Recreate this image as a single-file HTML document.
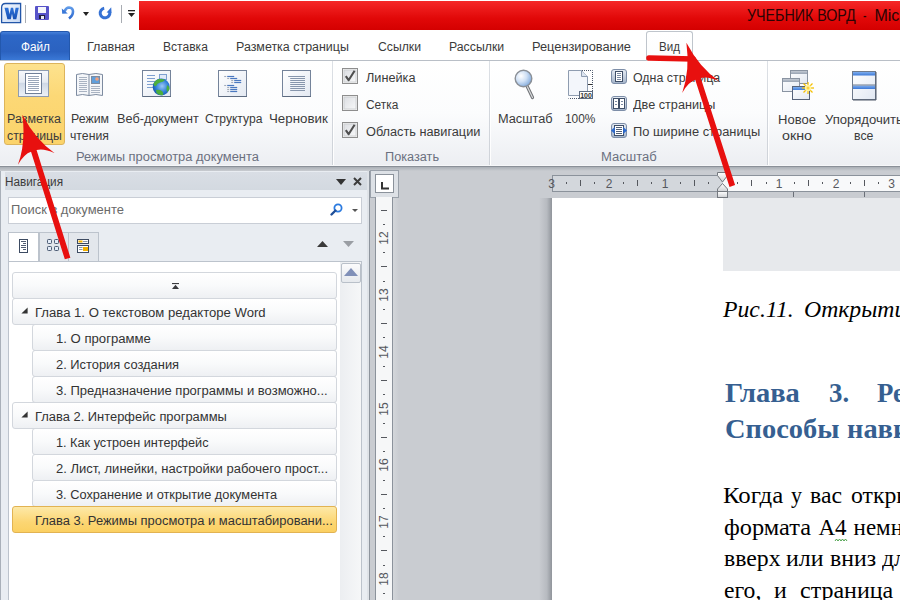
<!DOCTYPE html>
<html><head><meta charset="utf-8"><style>
html,body{margin:0;padding:0;}
body{width:900px;height:600px;overflow:hidden;position:relative;background:#fff;font-family:"Liberation Sans",sans-serif;}
.t{position:absolute;white-space:nowrap;transform-origin:0 0;}
.r{position:absolute;box-sizing:border-box;}
svg.r{overflow:visible;}
</style></head><body>
<div class="r" style="left:0px;top:0px;width:900px;height:30px;background:#ffffff;"></div>
<svg class="r" style="left:0px;top:2px;" width="23" height="22" viewBox="0 0 23 22"><defs><linearGradient id="wg" x1="0" y1="0" x2="1" y2="1"><stop offset="0" stop-color="#f4f8fe"/><stop offset="1" stop-color="#c6d8f3"/></linearGradient><linearGradient id="wb" x1="0" y1="0" x2="0" y2="1"><stop offset="0" stop-color="#2e72d8"/><stop offset="1" stop-color="#1650b4"/></linearGradient></defs>
<path d="M5.5 1.5 H20.6 V20.6 H1.6 V5.5 Q1.6 1.5 5.5 1.5Z" fill="url(#wg)" stroke="#2356a8" stroke-width="1.3"/>
<path d="M4.5 5.7 H8.3 L9.5 12.3 L10.9 5.7 H13.1 L14.4 12.3 L15.6 5.7 H18.8 L16.3 17.3 H13.2 L12 11.8 L10.8 17.3 H7.4Z" fill="url(#wb)"/></svg>
<div class="r" style="left:25px;top:5px;width:1px;height:18px;background:#a8acb2;"></div>
<svg class="r" style="left:35px;top:6px;" width="14" height="14" viewBox="0 0 14 14"><rect x="0" y="0" width="14" height="14" rx="1" fill="#5753c9"/><rect x="3" y="1" width="8" height="6" fill="#f4f6fb"/><rect x="4" y="9" width="6" height="4" fill="#202040"/><rect x="6" y="10" width="3" height="3" fill="#e8e8f0"/></svg>
<svg class="r" style="left:58px;top:3px;" width="18" height="18" viewBox="0 0 18 18"><defs><linearGradient id="ug" x1="0" y1="0" x2="0" y2="1"><stop offset="0" stop-color="#5f9ae8"/><stop offset="1" stop-color="#2f6ad0"/></linearGradient></defs><path d="M6.5 8.5 Q8 4.5 11 4.5 Q15 4.8 15 8.5 Q15 12.5 11 15.5" fill="none" stroke="url(#ug)" stroke-width="2.6"/><path d="M3.8 5.5 L4.2 10.8 L9.8 10.4Z" fill="#3a78d8"/></svg>
<svg class="r" style="left:83px;top:12px;" width="6" height="4" viewBox="0 0 6 4"><path d="M0 0 H6 L3 4Z" fill="#222"/></svg>
<svg class="r" style="left:97px;top:4px;" width="16" height="16" viewBox="0 0 16 16"><path d="M7.2 4.3 A4.8 4.8 0 1 0 12.5 7.4" fill="none" stroke="#3672d4" stroke-width="3"/><path d="M9.6 8.6 L14.6 8.9 L14.2 3.2Z" fill="#3672d4"/></svg>
<div class="r" style="left:121px;top:5px;width:1px;height:18px;background:#a8acb2;"></div>
<svg class="r" style="left:128px;top:10px;" width="7" height="7" viewBox="0 0 7 7"><rect x="0" y="0" width="7" height="1.3" fill="#222"/><path d="M0 3 H7 L3.5 7Z" fill="#222"/></svg>
<div class="r" style="left:139px;top:1px;width:761px;height:29px;background:linear-gradient(#f52828,#e10808 60%,#d40000);"></div>
<div class="t" style="left:747.00px;top:8.26px;font-size:16px;line-height:16px;color:#2a0404;font-family:'Liberation Sans', sans-serif;font-weight:normal;font-style:normal;transform:scaleX(0.8912);">УЧЕБНИК ВОРД</div>
<div class="t" style="left:863.30px;top:8.26px;font-size:16px;line-height:16px;color:#2a0404;font-family:'Liberation Sans', sans-serif;font-weight:normal;font-style:normal;transform:scaleX(0.6476);">-</div>
<div class="t" style="left:874.40px;top:8.26px;font-size:16px;line-height:16px;color:#2a0404;font-family:'Liberation Sans', sans-serif;font-weight:normal;font-style:normal;">Microsoft Word</div>
<div class="r" style="left:0px;top:30px;width:900px;height:30px;background:#ffffff;"></div>
<div class="r" style="left:0px;top:60px;width:900px;height:1px;background:#b9bfc7;"></div>
<div class="r" style="left:0px;top:31px;width:70px;height:29px;background:linear-gradient(#4580da 0%,#2d67c6 12%,#2b62c0 70%,#3a78d6 100%);border-radius:3px 3px 0 0;border:1px solid #2358ad;border-bottom:none;"></div>
<div class="t" style="left:21.00px;top:40.84px;font-size:12px;line-height:12px;color:#ffffff;font-family:'Liberation Sans', sans-serif;font-weight:normal;font-style:normal;transform:scaleX(0.9831);">Файл</div>
<div class="t" style="left:87.00px;top:41.34px;font-size:12px;line-height:12px;color:#3b3b3b;font-family:'Liberation Sans', sans-serif;font-weight:normal;font-style:normal;transform:scaleX(1.0492);">Главная</div>
<div class="t" style="left:163.00px;top:41.34px;font-size:12px;line-height:12px;color:#3b3b3b;font-family:'Liberation Sans', sans-serif;font-weight:normal;font-style:normal;transform:scaleX(1.0056);">Вставка</div>
<div class="t" style="left:236.00px;top:41.34px;font-size:12px;line-height:12px;color:#3b3b3b;font-family:'Liberation Sans', sans-serif;font-weight:normal;font-style:normal;transform:scaleX(1.0367);">Разметка страницы</div>
<div class="t" style="left:378.00px;top:41.34px;font-size:12px;line-height:12px;color:#3b3b3b;font-family:'Liberation Sans', sans-serif;font-weight:normal;font-style:normal;transform:scaleX(1.0178);">Ссылки</div>
<div class="t" style="left:449.00px;top:41.34px;font-size:12px;line-height:12px;color:#3b3b3b;font-family:'Liberation Sans', sans-serif;font-weight:normal;font-style:normal;transform:scaleX(1.0233);">Рассылки</div>
<div class="t" style="left:532.00px;top:41.34px;font-size:12px;line-height:12px;color:#3b3b3b;font-family:'Liberation Sans', sans-serif;font-weight:normal;font-style:normal;transform:scaleX(1.0674);">Рецензирование</div>
<div class="r" style="left:646px;top:31px;width:47px;height:31px;background:linear-gradient(#ffffff,#fcfdfd);border:1px solid #bfc5cc;border-bottom:none;border-radius:3px 3px 0 0;"></div>
<div class="t" style="left:659.00px;top:41.34px;font-size:12px;line-height:12px;color:#3b3b3b;font-family:'Liberation Sans', sans-serif;font-weight:normal;font-style:normal;transform:scaleX(0.9655);">Вид</div>
<div class="r" style="left:0px;top:61px;width:900px;height:105px;background:linear-gradient(#ffffff 0%,#fbfcfd 50%,#eceef2 100%);"></div>
<div class="r" style="left:0px;top:165px;width:900px;height:1px;background:#f6f7f9;"></div>
<div class="r" style="left:332px;top:61px;width:1px;height:104px;background:linear-gradient(#dde1e6,#d2d6dc 50%,#cfd3d9);"></div>
<div class="r" style="left:333px;top:61px;width:1px;height:104px;background:rgba(255,255,255,0.9);"></div>
<div class="r" style="left:489px;top:61px;width:1px;height:104px;background:linear-gradient(#dde1e6,#d2d6dc 50%,#cfd3d9);"></div>
<div class="r" style="left:490px;top:61px;width:1px;height:104px;background:rgba(255,255,255,0.9);"></div>
<div class="r" style="left:767px;top:61px;width:1px;height:104px;background:linear-gradient(#dde1e6,#d2d6dc 50%,#cfd3d9);"></div>
<div class="r" style="left:768px;top:61px;width:1px;height:104px;background:rgba(255,255,255,0.9);"></div>
<div class="r" style="left:4px;top:63px;width:61px;height:82px;background:linear-gradient(#fde28e,#fcd876 40%,#fbd36a);border:1px solid #dcb45c;border-radius:3px;"></div>
<svg class="r" style="left:18px;top:70px;" width="31" height="27" viewBox="0 0 31 27"><defs><linearGradient id="fr1" x1="0" y1="0" x2="0" y2="1"><stop offset="0" stop-color="#f7f9fc"/><stop offset="0.45" stop-color="#e6ebf2"/><stop offset="0.5" stop-color="#cfd9e6"/><stop offset="1" stop-color="#eef2f7"/></linearGradient></defs>
<rect x="0.5" y="0.5" width="30" height="26" fill="url(#fr1)" stroke="#8e9cb0"/>
<rect x="7.5" y="3.5" width="16" height="20" fill="#fff" stroke="#6f7f97"/>
<g stroke="#9aa6b8" stroke-width="1"><line x1="10" y1="6.5" x2="21" y2="6.5"/><line x1="10" y1="8.5" x2="21" y2="8.5"/><line x1="10" y1="10.5" x2="21" y2="10.5"/><line x1="10" y1="12.5" x2="21" y2="12.5"/><line x1="10" y1="14.5" x2="21" y2="14.5"/><line x1="10" y1="16.5" x2="21" y2="16.5"/><line x1="10" y1="18.5" x2="21" y2="18.5"/><line x1="10" y1="20.5" x2="21" y2="20.5"/></g></svg>
<svg class="r" style="left:75px;top:72px;" width="29" height="26" viewBox="0 0 29 26"><path d="M1.5 2.5 Q7 0.5 14 2.5 Q21 0.5 27.5 2.5 V23.5 Q21 21.5 14 23.5 Q7 21.5 1.5 23.5Z" fill="#f4f6f9" stroke="#7d8ba0"/>
<line x1="14" y1="2.5" x2="14" y2="23.5" stroke="#7d8ba0"/>
<g stroke="#a9b3c2"><line x1="4" y1="5.5" x2="12" y2="5.5"/><line x1="4" y1="7.5" x2="12" y2="7.5"/><line x1="4" y1="9.5" x2="12" y2="9.5"/><line x1="4" y1="11.5" x2="12" y2="11.5"/><line x1="4" y1="13.5" x2="12" y2="13.5"/><line x1="4" y1="15.5" x2="12" y2="15.5"/><line x1="4" y1="17.5" x2="12" y2="17.5"/><line x1="4" y1="19.5" x2="12" y2="19.5"/><line x1="16" y1="14.5" x2="25" y2="14.5"/><line x1="16" y1="16.5" x2="25" y2="16.5"/><line x1="16" y1="18.5" x2="25" y2="18.5"/><line x1="16" y1="20.5" x2="25" y2="20.5"/></g>
<rect x="16.5" y="4.5" width="8" height="7" fill="#5f9fdc" stroke="#7d8ba0"/><circle cx="22" cy="7" r="1.8" fill="#f5a07a"/></svg>
<svg class="r" style="left:142px;top:70px;" width="30" height="28" viewBox="0 0 30 28"><defs><linearGradient id="fw" x1="0" y1="0" x2="1" y2="1"><stop offset="0" stop-color="#ffffff"/><stop offset="1" stop-color="#e3e9f2"/></linearGradient><radialGradient id="gl" cx="0.55" cy="0.45" r="0.6"><stop offset="0" stop-color="#9cc8f5"/><stop offset="0.6" stop-color="#2f7fd8"/><stop offset="1" stop-color="#124fa6"/></radialGradient></defs><rect x="0.5" y="0.5" width="28" height="26" fill="url(#fw)" stroke="#74839a"/><line x1="1" y1="26.5" x2="29" y2="26.5" stroke="#5d6b80"/><g stroke="#7d9fd0" stroke-width="1"><line x1="5" y1="5.5" x2="13" y2="5.5"/><line x1="5" y1="8.5" x2="13" y2="8.5"/><line x1="5" y1="11.5" x2="13" y2="11.5"/><line x1="5" y1="14.5" x2="13" y2="14.5"/><line x1="5" y1="17.5" x2="13" y2="17.5"/></g><rect x="17.5" y="4.5" width="7" height="5" fill="#dfe9f7" stroke="#7d9fd0"/><circle cx="19.2" cy="17" r="8.5" fill="url(#gl)"/><path d="M11.5 14 Q13 10 17 9 Q21 8.6 23 10 Q21 12 18 12.5 Q15 13 14 16 Q12.5 17 11.5 14Z M14 20 Q17 19 20 21 Q22 23 21 25.3 Q17 25.5 14.5 23Z M25 15 Q27.5 16 27.6 19 Q26.5 21.5 25 22 Q24 19 25 15Z" fill="#4caf3c"/></svg>
<svg class="r" style="left:218px;top:70px;" width="30" height="28" viewBox="0 0 30 28"><defs><linearGradient id="fs" x1="0" y1="0" x2="1" y2="1"><stop offset="0" stop-color="#ffffff"/><stop offset="1" stop-color="#e3e9f2"/></linearGradient></defs><rect x="0.5" y="0.5" width="28" height="26" fill="url(#fs)" stroke="#74839a"/><line x1="1" y1="26.5" x2="29" y2="26.5" stroke="#5d6b80"/><line x1="6.2" y1="6.5" x2="8.2" y2="6.5" stroke="#a3acb9" stroke-width="1.1"/><line x1="9.2" y1="6.5" x2="16.2" y2="6.5" stroke="#4a78c0" stroke-width="1.2"/><line x1="9.2" y1="8.5" x2="11.2" y2="8.5" stroke="#a3acb9" stroke-width="1.1"/><line x1="12.2" y1="8.5" x2="19.2" y2="8.5" stroke="#4a78c0" stroke-width="1.2"/><line x1="13.2" y1="10.5" x2="15.2" y2="10.5" stroke="#a3acb9" stroke-width="1.1"/><line x1="16.2" y1="10.5" x2="23.2" y2="10.5" stroke="#4a78c0" stroke-width="1.2"/><line x1="13.2" y1="12.5" x2="15.2" y2="12.5" stroke="#a3acb9" stroke-width="1.1"/><line x1="16.2" y1="12.5" x2="23.2" y2="12.5" stroke="#4a78c0" stroke-width="1.2"/><line x1="6.2" y1="15.5" x2="8.2" y2="15.5" stroke="#a3acb9" stroke-width="1.1"/><line x1="9.2" y1="15.5" x2="16.2" y2="15.5" stroke="#4a78c0" stroke-width="1.2"/><line x1="9.2" y1="17.5" x2="11.2" y2="17.5" stroke="#a3acb9" stroke-width="1.1"/><line x1="12.2" y1="17.5" x2="19.2" y2="17.5" stroke="#4a78c0" stroke-width="1.2"/><line x1="9.2" y1="19.5" x2="11.2" y2="19.5" stroke="#a3acb9" stroke-width="1.1"/><line x1="12.2" y1="19.5" x2="19.2" y2="19.5" stroke="#4a78c0" stroke-width="1.2"/><line x1="9.2" y1="21.5" x2="11.2" y2="21.5" stroke="#a3acb9" stroke-width="1.1"/><line x1="12.2" y1="21.5" x2="19.2" y2="21.5" stroke="#4a78c0" stroke-width="1.2"/></svg>
<svg class="r" style="left:282px;top:70px;" width="30" height="28" viewBox="0 0 30 28"><defs><linearGradient id="fd" x1="0" y1="0" x2="1" y2="1"><stop offset="0" stop-color="#ffffff"/><stop offset="1" stop-color="#e3e9f2"/></linearGradient></defs><rect x="0.5" y="0.5" width="28" height="26" fill="url(#fd)" stroke="#74839a"/><line x1="1" y1="26.5" x2="29" y2="26.5" stroke="#5d6b80"/><g stroke="#8796ac" stroke-width="1"><line x1="6.2" y1="6.5" x2="23" y2="6.5"/><line x1="8.2" y1="8.5" x2="23" y2="8.5"/><line x1="8.2" y1="10.5" x2="23" y2="10.5"/><line x1="8.2" y1="12.5" x2="23" y2="12.5"/><line x1="8.2" y1="14.5" x2="23" y2="14.5"/><line x1="8.2" y1="16.5" x2="23" y2="16.5"/><line x1="8.2" y1="18.5" x2="23" y2="18.5"/><line x1="8.2" y1="20.5" x2="23" y2="20.5"/></g></svg>
<div class="t" style="left:7.00px;top:112.54px;font-size:12px;line-height:12px;color:#3b3b3b;font-family:'Liberation Sans', sans-serif;font-weight:normal;font-style:normal;transform:scaleX(1.0385);">Разметка</div>
<div class="t" style="left:7.00px;top:129.84px;font-size:12px;line-height:12px;color:#3b3b3b;font-family:'Liberation Sans', sans-serif;font-weight:normal;font-style:normal;transform:scaleX(1.0233);">страницы</div>
<div class="t" style="left:71.00px;top:112.54px;font-size:12px;line-height:12px;color:#3b3b3b;font-family:'Liberation Sans', sans-serif;font-weight:normal;font-style:normal;transform:scaleX(1.0270);">Режим</div>
<div class="t" style="left:70.00px;top:129.84px;font-size:12px;line-height:12px;color:#3b3b3b;font-family:'Liberation Sans', sans-serif;font-weight:normal;font-style:normal;transform:scaleX(1.0196);">чтения</div>
<div class="t" style="left:117.00px;top:112.54px;font-size:12px;line-height:12px;color:#3b3b3b;font-family:'Liberation Sans', sans-serif;font-weight:normal;font-style:normal;transform:scaleX(1.0581);">Веб-документ</div>
<div class="t" style="left:204.50px;top:112.54px;font-size:12px;line-height:12px;color:#3b3b3b;font-family:'Liberation Sans', sans-serif;font-weight:normal;font-style:normal;transform:scaleX(1.0088);">Структура</div>
<div class="t" style="left:268.50px;top:112.54px;font-size:12px;line-height:12px;color:#3b3b3b;font-family:'Liberation Sans', sans-serif;font-weight:normal;font-style:normal;transform:scaleX(1.1080);">Черновик</div>
<div class="t" style="left:76.00px;top:150.54px;font-size:12px;line-height:12px;color:#6b7080;font-family:'Liberation Sans', sans-serif;font-weight:normal;font-style:normal;transform:scaleX(1.0749);">Режимы просмотра документа</div>
<svg class="r" style="left:342px;top:68px;" width="16" height="16" viewBox="0 0 16 16"><defs><linearGradient id="cb" x1="0" y1="0" x2="1" y2="1"><stop offset="0" stop-color="#dcdee2"/><stop offset="1" stop-color="#f7f8f9"/></linearGradient></defs><rect x="0.5" y="0.5" width="15" height="15" fill="#f4f4f4" stroke="#8e8e8e"/><rect x="2" y="2" width="12" height="12" fill="url(#cb)" stroke="#c9cbce" stroke-width="0.8"/><path d="M3.8 8.2 L6.6 12.2 L12.6 2.8" fill="none" stroke="#4f4f4f" stroke-width="2.1" stroke-linejoin="round"/></svg>
<svg class="r" style="left:342px;top:95px;" width="16" height="16" viewBox="0 0 16 16"><defs><linearGradient id="cb" x1="0" y1="0" x2="1" y2="1"><stop offset="0" stop-color="#dcdee2"/><stop offset="1" stop-color="#f7f8f9"/></linearGradient></defs><rect x="0.5" y="0.5" width="15" height="15" fill="#f4f4f4" stroke="#8e8e8e"/><rect x="2" y="2" width="12" height="12" fill="url(#cb)" stroke="#c9cbce" stroke-width="0.8"/></svg>
<svg class="r" style="left:342px;top:122px;" width="16" height="16" viewBox="0 0 16 16"><defs><linearGradient id="cb" x1="0" y1="0" x2="1" y2="1"><stop offset="0" stop-color="#dcdee2"/><stop offset="1" stop-color="#f7f8f9"/></linearGradient></defs><rect x="0.5" y="0.5" width="15" height="15" fill="#f4f4f4" stroke="#8e8e8e"/><rect x="2" y="2" width="12" height="12" fill="url(#cb)" stroke="#c9cbce" stroke-width="0.8"/><path d="M3.8 8.2 L6.6 12.2 L12.6 2.8" fill="none" stroke="#4f4f4f" stroke-width="2.1" stroke-linejoin="round"/></svg>
<div class="t" style="left:365.50px;top:71.84px;font-size:12px;line-height:12px;color:#3b3b3b;font-family:'Liberation Sans', sans-serif;font-weight:normal;font-style:normal;transform:scaleX(1.0588);">Линейка</div>
<div class="t" style="left:365.50px;top:99.14px;font-size:12px;line-height:12px;color:#3b3b3b;font-family:'Liberation Sans', sans-serif;font-weight:normal;font-style:normal;transform:scaleX(0.9924);">Сетка</div>
<div class="t" style="left:365.50px;top:125.84px;font-size:12px;line-height:12px;color:#3b3b3b;font-family:'Liberation Sans', sans-serif;font-weight:normal;font-style:normal;transform:scaleX(1.0602);">Область навигации</div>
<div class="t" style="left:385.00px;top:150.54px;font-size:12px;line-height:12px;color:#6b7080;font-family:'Liberation Sans', sans-serif;font-weight:normal;font-style:normal;transform:scaleX(1.0588);">Показать</div>
<svg class="r" style="left:513px;top:69px;" width="22" height="31" viewBox="0 0 22 31"><defs><radialGradient id="mg" cx="0.35" cy="0.35" r="0.7"><stop offset="0" stop-color="#ffffff"/><stop offset="0.5" stop-color="#cfe0f5"/><stop offset="1" stop-color="#7fa9dc"/></radialGradient></defs>
<line x1="14" y1="17" x2="19.5" y2="28.5" stroke="#6e7175" stroke-width="3.2" stroke-linecap="round"/><line x1="14" y1="17" x2="19.5" y2="28.5" stroke="#d8dadc" stroke-width="1.2" stroke-linecap="round"/>
<circle cx="10.5" cy="9.5" r="8.3" fill="url(#mg)" stroke="#8a8f96" stroke-width="1.4"/></svg>
<svg class="r" style="left:567px;top:70px;" width="27" height="30" viewBox="0 0 27 30"><path d="M1.5 0.5 H14.5 L20.5 6.5 V25.5 H1.5Z" fill="#f3f6fb" stroke="#8e9cb0"/><path d="M14.5 0.5 V6.5 H20.5" fill="#dde5f0" stroke="#8e9cb0"/>
<path d="M15 0.5 H25.5 V28.5 H1.5" fill="none" stroke="#4a5568" stroke-dasharray="1 1"/>
<line x1="21" y1="14.5" x2="25" y2="14.5" stroke="#333"/>
<rect x="12.5" y="21.5" width="13" height="7" fill="#fff" stroke="#5d6b80"/><text x="19" y="28" text-anchor="middle" font-family="Liberation Sans" font-weight="bold" font-size="7" fill="#333">100</text></svg>
<div class="t" style="left:497.50px;top:112.84px;font-size:12px;line-height:12px;color:#3b3b3b;font-family:'Liberation Sans', sans-serif;font-weight:normal;font-style:normal;transform:scaleX(1.0634);">Масштаб</div>
<div class="t" style="left:565.00px;top:112.84px;font-size:12px;line-height:12px;color:#3b3b3b;font-family:'Liberation Sans', sans-serif;font-weight:normal;font-style:normal;transform:scaleX(0.9919);">100%</div>
<svg class="r" style="left:611px;top:69px;" width="16" height="15" viewBox="0 0 16 15"><defs><linearGradient id="si1" x1="0" y1="0" x2="0" y2="1"><stop offset="0" stop-color="#e6ecf4"/><stop offset="1" stop-color="#a3b3c9"/></linearGradient></defs><rect x="0.5" y="0.5" width="15" height="14" rx="2.5" fill="url(#si1)" stroke="#7d8ea8"/><rect x="4.5" y="2.5" width="7" height="10" fill="#fff" stroke="#3f4f68"/><g stroke="#6b7d99" stroke-width="0.9"><line x1="6" y1="4.5" x2="10" y2="4.5"/><line x1="6" y1="6.5" x2="10" y2="6.5"/><line x1="6" y1="8.5" x2="10" y2="8.5"/><line x1="6" y1="10.5" x2="10" y2="10.5"/></g></svg>
<svg class="r" style="left:611px;top:96px;" width="16" height="15" viewBox="0 0 16 15"><defs><linearGradient id="si2" x1="0" y1="0" x2="0" y2="1"><stop offset="0" stop-color="#e6ecf4"/><stop offset="1" stop-color="#a3b3c9"/></linearGradient></defs><rect x="0.5" y="0.5" width="15" height="14" rx="2.5" fill="url(#si2)" stroke="#7d8ea8"/><rect x="2.5" y="2.5" width="5" height="10" fill="#fff" stroke="#3f4f68"/><rect x="8.5" y="2.5" width="5" height="10" fill="#fff" stroke="#3f4f68"/><g stroke="#6b7d99" stroke-width="0.9"><line x1="4" y1="5.5" x2="6" y2="5.5"/><line x1="4" y1="8.5" x2="6" y2="8.5"/><line x1="10" y1="5.5" x2="12" y2="5.5"/><line x1="10" y1="8.5" x2="12" y2="8.5"/></g></svg>
<svg class="r" style="left:611px;top:123px;" width="16" height="15" viewBox="0 0 16 15"><defs><linearGradient id="si3" x1="0" y1="0" x2="0" y2="1"><stop offset="0" stop-color="#e6ecf4"/><stop offset="1" stop-color="#a3b3c9"/></linearGradient></defs><rect x="0.5" y="0.5" width="15" height="14" rx="2.5" fill="url(#si3)" stroke="#7d8ea8"/><rect x="3.5" y="2.5" width="9" height="10" fill="#fff" stroke="#3f4f68"/><g stroke="#3f4f68" stroke-width="0.9"><line x1="5" y1="4.5" x2="11" y2="4.5"/><line x1="5" y1="6.5" x2="11" y2="6.5"/><line x1="5" y1="8.5" x2="11" y2="8.5"/><line x1="5" y1="10.5" x2="11" y2="10.5"/></g><path d="M0 7.5 L3.8 4 V11Z M16 7.5 L12.2 4 V11Z" fill="#2d6bd0"/></svg>
<div class="t" style="left:632.70px;top:72.34px;font-size:12px;line-height:12px;color:#3b3b3b;font-family:'Liberation Sans', sans-serif;font-weight:normal;font-style:normal;transform:scaleX(1.0331);">Одна страница</div>
<div class="t" style="left:632.70px;top:99.24px;font-size:12px;line-height:12px;color:#3b3b3b;font-family:'Liberation Sans', sans-serif;font-weight:normal;font-style:normal;transform:scaleX(1.0551);">Две страницы</div>
<div class="t" style="left:632.70px;top:126.14px;font-size:12px;line-height:12px;color:#3b3b3b;font-family:'Liberation Sans', sans-serif;font-weight:normal;font-style:normal;transform:scaleX(1.0720);">По ширине страницы</div>
<div class="t" style="left:601.00px;top:150.54px;font-size:12px;line-height:12px;color:#6b7080;font-family:'Liberation Sans', sans-serif;font-weight:normal;font-style:normal;transform:scaleX(1.0849);">Масштаб</div>
<svg class="r" style="left:781px;top:69px;" width="34" height="32" viewBox="0 0 34 32"><defs><linearGradient id="tb" x1="0" y1="0" x2="0" y2="1"><stop offset="0" stop-color="#c3cad4"/><stop offset="1" stop-color="#98a3b2"/></linearGradient><linearGradient id="tbb" x1="0" y1="0" x2="0" y2="1"><stop offset="0" stop-color="#7fb0f0"/><stop offset="1" stop-color="#3f7bd8"/></linearGradient><linearGradient id="wf" x1="0" y1="0" x2="1" y2="1"><stop offset="0" stop-color="#ffffff"/><stop offset="1" stop-color="#e2e8f1"/></linearGradient></defs><rect x="9.5" y="1.5" width="17" height="13" fill="url(#wf)" stroke="#8a94a2"/><rect x="10" y="2" width="16" height="3" fill="url(#tb)"/><rect x="1.5" y="9.5" width="17" height="13" fill="url(#wf)" stroke="#8a94a2"/><rect x="2" y="10" width="16" height="3" fill="url(#tb)"/><rect x="11.5" y="17.5" width="17" height="13" fill="url(#wf)" stroke="#56637a"/><rect x="12" y="18" width="16" height="3" fill="url(#tbb)"/><g stroke="#f5c000" stroke-width="1.3"><line x1="27" y1="13" x2="27" y2="25"/><line x1="21" y1="19" x2="33" y2="19"/><line x1="22.5" y1="14.5" x2="31.5" y2="23.5"/><line x1="31.5" y1="14.5" x2="22.5" y2="23.5"/></g><circle cx="27" cy="19" r="3.2" fill="#fff3a0"/><circle cx="27" cy="19" r="1.5" fill="#ffd23c"/></svg>
<svg class="r" style="left:851px;top:71px;" width="26" height="30" viewBox="0 0 26 30"><defs><linearGradient id="ab" x1="0" y1="0" x2="0" y2="1"><stop offset="0" stop-color="#7eaef0"/><stop offset="1" stop-color="#3c78d6"/></linearGradient><linearGradient id="af" x1="0" y1="0" x2="1" y2="1"><stop offset="0" stop-color="#ffffff"/><stop offset="1" stop-color="#e0e7f2"/></linearGradient></defs><rect x="1.5" y="0.5" width="23" height="28" fill="url(#af)" stroke="#6e7a8c"/><line x1="25" y1="1" x2="25" y2="29" stroke="#4e5868"/><line x1="2" y1="29" x2="25" y2="29" stroke="#4e5868"/><rect x="2" y="1" width="22" height="3.5" fill="url(#ab)"/><rect x="2" y="14.5" width="22" height="3.5" fill="url(#ab)"/><line x1="2" y1="14" x2="24" y2="14" stroke="#6e7a8c"/></svg>
<div class="t" style="left:778.00px;top:113.64px;font-size:12px;line-height:12px;color:#3b3b3b;font-family:'Liberation Sans', sans-serif;font-weight:normal;font-style:normal;transform:scaleX(1.0857);">Новое</div>
<div class="t" style="left:782.00px;top:130.04px;font-size:12px;line-height:12px;color:#3b3b3b;font-family:'Liberation Sans', sans-serif;font-weight:normal;font-style:normal;transform:scaleX(1.1881);">окно</div>
<div class="t" style="left:825.00px;top:113.64px;font-size:12px;line-height:12px;color:#3b3b3b;font-family:'Liberation Sans', sans-serif;font-weight:normal;font-style:normal;transform:scaleX(1.0909);">Упорядочить</div>
<div class="t" style="left:853.50px;top:130.04px;font-size:12px;line-height:12px;color:#3b3b3b;font-family:'Liberation Sans', sans-serif;font-weight:normal;font-style:normal;transform:scaleX(1.0263);">все</div>
<div class="r" style="left:0px;top:166px;width:900px;height:434px;background:#c9ccd1;"></div>
<div class="r" style="left:0px;top:166px;width:900px;height:1px;background:#8a9098;"></div>
<div class="r" style="left:0px;top:167px;width:900px;height:4px;background:linear-gradient(#a9aeb5,#c9ccd1);"></div>
<div class="r" style="left:393px;top:171px;width:6px;height:429px;background:linear-gradient(90deg,#d3d6da,#c9ccd1);"></div>
<div class="r" style="left:0px;top:171px;width:367px;height:429px;background:#e9edf2;border-left:1px solid #a9b0b9;"></div>
<div class="r" style="left:5px;top:172px;width:362px;height:18px;background:linear-gradient(#d9dee5,#d3d9e0);"></div>
<div class="t" style="left:5.00px;top:175.84px;font-size:12px;line-height:12px;color:#3b3b3b;font-family:'Liberation Sans', sans-serif;font-weight:normal;font-style:normal;transform:scaleX(0.9789);">Навигация</div>
<svg class="r" style="left:336px;top:179px;" width="10" height="6" viewBox="0 0 10 6"><path d="M0 0 H10 L5 6Z" fill="#333"/></svg>
<svg class="r" style="left:353px;top:177px;" width="9" height="9" viewBox="0 0 9 9"><path d="M1 1 L8 8 M8 1 L1 8" stroke="#3c3c3c" stroke-width="2"/></svg>
<div class="r" style="left:8px;top:197px;width:354px;height:27px;background:#fff;border:1px solid #c9ced6;"></div>
<div class="t" style="left:11.20px;top:204.24px;font-size:12px;line-height:12px;color:#6a6a6a;font-family:'Liberation Sans', sans-serif;font-weight:normal;font-style:normal;transform:scaleX(1.0768);">Поиск в документе</div>
<svg class="r" style="left:330px;top:203px;" width="13" height="13" viewBox="0 0 13 13"><circle cx="8" cy="5" r="3.6" fill="none" stroke="#2c7be0" stroke-width="1.8"/><line x1="5.5" y1="7.5" x2="1.5" y2="11.5" stroke="#1f4f99" stroke-width="2.4" stroke-linecap="round"/></svg>
<svg class="r" style="left:352px;top:209px;" width="6" height="3" viewBox="0 0 6 3"><path d="M0 0 H6 L3 3Z" fill="#555"/></svg>
<div class="r" style="left:39px;top:232px;width:30px;height:30px;background:#e3e7ec;border:1px solid #bcc3cc;"></div>
<div class="r" style="left:68px;top:232px;width:31px;height:30px;background:#e3e7ec;border:1px solid #bcc3cc;"></div>
<div class="r" style="left:8px;top:232px;width:31px;height:30px;background:#fff;border:1px solid #bcc3cc;border-bottom:none;"></div>
<svg class="r" style="left:19px;top:239px;" width="10" height="15" viewBox="0 0 10 15"><rect x="0.5" y="0.5" width="8" height="13" fill="#fff" stroke="#3d4b62"/><g stroke="#3d4b62" stroke-width="0.9"><line x1="2" y1="2.5" x2="7" y2="2.5"/><line x1="4" y1="4.5" x2="7" y2="4.5"/><line x1="2" y1="6.5" x2="7" y2="6.5"/><line x1="2" y1="8.5" x2="7" y2="8.5"/><line x1="4" y1="10.5" x2="7" y2="10.5"/></g></svg>
<svg class="r" style="left:47px;top:239px;" width="13" height="13" viewBox="0 0 13 13"><g fill="#e4ecf8" stroke="#4a5a72"><rect x="0.5" y="0.5" width="4" height="4" rx="0.8"/><rect x="7.5" y="0.5" width="4" height="4" rx="0.8"/><rect x="0.5" y="7.5" width="4" height="4" rx="0.8"/><rect x="7.5" y="7.5" width="4" height="4" rx="0.8"/></g></svg>
<svg class="r" style="left:77px;top:239px;" width="13" height="14" viewBox="0 0 13 14"><rect x="0.5" y="0.5" width="11" height="4" fill="#fff" stroke="#3d4b62"/><rect x="1.5" y="1.5" width="4" height="2" fill="#f2b000"/><line x1="6" y1="2.5" x2="10.5" y2="2.5" stroke="#8c98aa"/><rect x="0.5" y="6.5" width="11" height="7" fill="#fff" stroke="#3d4b62"/><rect x="6" y="8" width="5" height="4" fill="#f2b000"/><g stroke="#8c98aa"><line x1="2" y1="8.5" x2="5.5" y2="8.5"/><line x1="2" y1="10.5" x2="5.5" y2="10.5"/></g></svg>
<svg class="r" style="left:317px;top:241px;" width="11" height="6" viewBox="0 0 11 6"><path d="M0 6 H11 L5.5 0Z" fill="#3a3a3a"/></svg>
<svg class="r" style="left:343px;top:241px;" width="11" height="6" viewBox="0 0 11 6"><path d="M0 0 H11 L5.5 6Z" fill="#9a9ea4"/></svg>
<div class="r" style="left:8px;top:261px;width:354px;height:339px;background:#fff;border:1px solid #bcc3cc;border-bottom:none;"></div>
<div class="r" style="left:340px;top:262px;width:21px;height:338px;background:linear-gradient(90deg,#eceef1,#f6f7f8);"></div>
<div class="r" style="left:341px;top:263px;width:20px;height:20px;background:linear-gradient(#fbfbfc,#e6e9ed);border:1px solid #b9c0c9;border-radius:2px;"></div>
<svg class="r" style="left:344px;top:268px;" width="14" height="8" viewBox="0 0 14 8"><path d="M0 8 H14 L7 0Z" fill="#8090b8"/></svg>
<div class="r" style="left:12px;top:272px;width:325px;height:27px;background:linear-gradient(#ffffff,#f9fafb 50%,#eef0f3);border:1px solid #d3d7dd;border-radius:3px;"></div>
<div class="r" style="left:12px;top:298px;width:325px;height:27px;background:linear-gradient(#ffffff,#f9fafb 50%,#eef0f3);border:1px solid #d3d7dd;border-radius:3px;"></div>
<div class="t" style="left:35.00px;top:306.84px;font-size:12px;line-height:12px;color:#333333;font-family:'Liberation Sans', sans-serif;font-weight:normal;font-style:normal;transform:scaleX(1.0929);">Глава 1. О текстовом редакторе Word</div>
<svg class="r" style="left:21px;top:307px;" width="7" height="7" viewBox="0 0 7 7"><path d="M6.6 0.4 V6.6 H0.4Z" fill="#333"/></svg>
<div class="r" style="left:32px;top:324px;width:305px;height:27px;background:linear-gradient(#ffffff,#f9fafb 50%,#eef0f3);border:1px solid #d3d7dd;border-radius:3px;"></div>
<div class="t" style="left:55.50px;top:332.84px;font-size:12px;line-height:12px;color:#333333;font-family:'Liberation Sans', sans-serif;font-weight:normal;font-style:normal;transform:scaleX(1.0939);">1. О программе</div>
<div class="r" style="left:32px;top:350px;width:305px;height:27px;background:linear-gradient(#ffffff,#f9fafb 50%,#eef0f3);border:1px solid #d3d7dd;border-radius:3px;"></div>
<div class="t" style="left:55.50px;top:358.84px;font-size:12px;line-height:12px;color:#333333;font-family:'Liberation Sans', sans-serif;font-weight:normal;font-style:normal;transform:scaleX(1.0736);">2. История создания</div>
<div class="r" style="left:32px;top:376px;width:305px;height:27px;background:linear-gradient(#ffffff,#f9fafb 50%,#eef0f3);border:1px solid #d3d7dd;border-radius:3px;"></div>
<div class="t" style="left:55.50px;top:384.84px;font-size:12px;line-height:12px;color:#333333;font-family:'Liberation Sans', sans-serif;font-weight:normal;font-style:normal;transform:scaleX(1.0846);">3. Предназначение программы и возможно...</div>
<div class="r" style="left:12px;top:402px;width:325px;height:27px;background:linear-gradient(#ffffff,#f9fafb 50%,#eef0f3);border:1px solid #d3d7dd;border-radius:3px;"></div>
<div class="t" style="left:35.00px;top:410.84px;font-size:12px;line-height:12px;color:#333333;font-family:'Liberation Sans', sans-serif;font-weight:normal;font-style:normal;transform:scaleX(1.0756);">Глава 2. Интерфейс программы</div>
<svg class="r" style="left:21px;top:411px;" width="7" height="7" viewBox="0 0 7 7"><path d="M6.6 0.4 V6.6 H0.4Z" fill="#333"/></svg>
<div class="r" style="left:32px;top:428px;width:305px;height:27px;background:linear-gradient(#ffffff,#f9fafb 50%,#eef0f3);border:1px solid #d3d7dd;border-radius:3px;"></div>
<div class="t" style="left:55.50px;top:436.84px;font-size:12px;line-height:12px;color:#333333;font-family:'Liberation Sans', sans-serif;font-weight:normal;font-style:normal;transform:scaleX(1.0572);">1. Как устроен интерфейс</div>
<div class="r" style="left:32px;top:454px;width:305px;height:27px;background:linear-gradient(#ffffff,#f9fafb 50%,#eef0f3);border:1px solid #d3d7dd;border-radius:3px;"></div>
<div class="t" style="left:55.50px;top:462.84px;font-size:12px;line-height:12px;color:#333333;font-family:'Liberation Sans', sans-serif;font-weight:normal;font-style:normal;transform:scaleX(1.0841);">2. Лист, линейки, настройки рабочего прост...</div>
<div class="r" style="left:32px;top:480px;width:305px;height:27px;background:linear-gradient(#ffffff,#f9fafb 50%,#eef0f3);border:1px solid #d3d7dd;border-radius:3px;"></div>
<div class="t" style="left:55.50px;top:488.84px;font-size:12px;line-height:12px;color:#333333;font-family:'Liberation Sans', sans-serif;font-weight:normal;font-style:normal;transform:scaleX(1.0643);">3. Сохранение и открытие документа</div>
<div class="r" style="left:12px;top:506px;width:325px;height:27px;background:linear-gradient(#fde9a8,#fcd673 60%,#fbd062);border:1px solid #e2b352;border-radius:3px;"></div>
<div class="t" style="left:35.00px;top:514.84px;font-size:12px;line-height:12px;color:#333333;font-family:'Liberation Sans', sans-serif;font-weight:normal;font-style:normal;transform:scaleX(1.0767);">Глава 3. Режимы просмотра и масштабировани...</div>
<svg class="r" style="left:172px;top:283px;" width="7" height="6" viewBox="0 0 7 6"><rect x="0" y="0" width="7" height="1.1" fill="#3a3a3e"/><path d="M0 6 H7 L3.5 1.8Z" fill="#3a3a3e"/></svg>
<div class="r" style="left:367px;top:171px;width:3px;height:429px;background:#dfe3e8;"></div>
<div class="r" style="left:369px;top:171px;width:1px;height:429px;background:#8e959e;"></div>
<div class="r" style="left:370px;top:170px;width:29px;height:28px;background:#dde1e6;border:1px solid #9aa1aa;"></div>
<div class="r" style="left:375px;top:174px;width:19px;height:19px;background:#fff;border:1px solid #8b929b;"></div>
<svg class="r" style="left:381px;top:182px;" width="9" height="9" viewBox="0 0 9 9"><path d="M1 0 V6.5 H8" fill="none" stroke="#333" stroke-width="2"/></svg>
<div class="r" style="left:375px;top:197px;width:18px;height:403px;background:#f6f7f8;border-left:1px solid #8b929b;border-right:1px solid #8b929b;"></div>
<div class="t" style="left:376px;top:232.0px;width:16px;height:12px;font-size:12px;line-height:12px;text-align:center;color:#55585e;transform:rotate(-90deg);transform-origin:8px 6px;">12</div>
<div class="r" style="left:383px;top:224px;width:2px;height:1px;background:#55585e;"></div>
<div class="r" style="left:383px;top:252px;width:2px;height:1px;background:#55585e;"></div>
<div class="r" style="left:381px;top:210px;width:6px;height:1px;background:#55585e;"></div>
<div class="t" style="left:376px;top:288.8px;width:16px;height:12px;font-size:12px;line-height:12px;text-align:center;color:#55585e;transform:rotate(-90deg);transform-origin:8px 6px;">13</div>
<div class="r" style="left:383px;top:281px;width:2px;height:1px;background:#55585e;"></div>
<div class="r" style="left:383px;top:309px;width:2px;height:1px;background:#55585e;"></div>
<div class="r" style="left:381px;top:266px;width:6px;height:1px;background:#55585e;"></div>
<div class="t" style="left:376px;top:345.7px;width:16px;height:12px;font-size:12px;line-height:12px;text-align:center;color:#55585e;transform:rotate(-90deg);transform-origin:8px 6px;">14</div>
<div class="r" style="left:383px;top:337px;width:2px;height:1px;background:#55585e;"></div>
<div class="r" style="left:383px;top:366px;width:2px;height:1px;background:#55585e;"></div>
<div class="r" style="left:381px;top:323px;width:6px;height:1px;background:#55585e;"></div>
<div class="t" style="left:376px;top:402.5px;width:16px;height:12px;font-size:12px;line-height:12px;text-align:center;color:#55585e;transform:rotate(-90deg);transform-origin:8px 6px;">15</div>
<div class="r" style="left:383px;top:394px;width:2px;height:1px;background:#55585e;"></div>
<div class="r" style="left:383px;top:423px;width:2px;height:1px;background:#55585e;"></div>
<div class="r" style="left:381px;top:380px;width:6px;height:1px;background:#55585e;"></div>
<div class="t" style="left:376px;top:459.3px;width:16px;height:12px;font-size:12px;line-height:12px;text-align:center;color:#55585e;transform:rotate(-90deg);transform-origin:8px 6px;">16</div>
<div class="r" style="left:383px;top:451px;width:2px;height:1px;background:#55585e;"></div>
<div class="r" style="left:383px;top:480px;width:2px;height:1px;background:#55585e;"></div>
<div class="r" style="left:381px;top:437px;width:6px;height:1px;background:#55585e;"></div>
<div class="t" style="left:376px;top:516.1px;width:16px;height:12px;font-size:12px;line-height:12px;text-align:center;color:#55585e;transform:rotate(-90deg);transform-origin:8px 6px;">17</div>
<div class="r" style="left:383px;top:508px;width:2px;height:1px;background:#55585e;"></div>
<div class="r" style="left:383px;top:536px;width:2px;height:1px;background:#55585e;"></div>
<div class="r" style="left:381px;top:494px;width:6px;height:1px;background:#55585e;"></div>
<div class="t" style="left:376px;top:573.0px;width:16px;height:12px;font-size:12px;line-height:12px;text-align:center;color:#55585e;transform:rotate(-90deg);transform-origin:8px 6px;">18</div>
<div class="r" style="left:383px;top:565px;width:2px;height:1px;background:#55585e;"></div>
<div class="r" style="left:383px;top:593px;width:2px;height:1px;background:#55585e;"></div>
<div class="r" style="left:381px;top:550px;width:6px;height:1px;background:#55585e;"></div>
<div class="r" style="left:539px;top:198px;width:13px;height:402px;background:linear-gradient(90deg,rgba(130,135,142,0),rgba(130,135,142,0.25) 60%,rgba(120,125,132,0.7));"></div>
<div class="r" style="left:552px;top:198px;width:348px;height:402px;background:#fff;"></div>
<div class="r" style="left:552px;top:175px;width:348px;height:17px;background:#d3d7dc;border:1px solid #8b929b;border-right:none;"></div>
<div class="r" style="left:723px;top:176px;width:177px;height:15px;background:#f8f9fa;"></div>
<div class="t" style="left:543.5px;top:178px;width:16px;font-size:12px;line-height:12px;text-align:center;color:#55585e;">3</div>
<div class="t" style="left:601.0px;top:178px;width:16px;font-size:12px;line-height:12px;text-align:center;color:#55585e;">2</div>
<div class="t" style="left:657.0px;top:178px;width:16px;font-size:12px;line-height:12px;text-align:center;color:#55585e;">1</div>
<div class="t" style="left:771.0px;top:178px;width:16px;font-size:12px;line-height:12px;text-align:center;color:#55585e;">1</div>
<div class="t" style="left:828.0px;top:178px;width:16px;font-size:12px;line-height:12px;text-align:center;color:#55585e;">2</div>
<div class="t" style="left:883.5px;top:178px;width:16px;font-size:12px;line-height:12px;text-align:center;color:#55585e;">3</div>
<div class="r" style="left:580px;top:180px;width:1px;height:6px;background:#55585e;"></div>
<div class="r" style="left:637px;top:180px;width:1px;height:6px;background:#55585e;"></div>
<div class="r" style="left:694px;top:180px;width:1px;height:6px;background:#55585e;"></div>
<div class="r" style="left:751px;top:180px;width:1px;height:6px;background:#55585e;"></div>
<div class="r" style="left:808px;top:180px;width:1px;height:6px;background:#55585e;"></div>
<div class="r" style="left:864px;top:180px;width:1px;height:6px;background:#55585e;"></div>
<div class="r" style="left:566px;top:182px;width:1px;height:2px;background:#55585e;"></div>
<div class="r" style="left:594px;top:182px;width:1px;height:2px;background:#55585e;"></div>
<div class="r" style="left:623px;top:182px;width:1px;height:2px;background:#55585e;"></div>
<div class="r" style="left:651px;top:182px;width:1px;height:2px;background:#55585e;"></div>
<div class="r" style="left:680px;top:182px;width:1px;height:2px;background:#55585e;"></div>
<div class="r" style="left:708px;top:182px;width:1px;height:2px;background:#55585e;"></div>
<div class="r" style="left:737px;top:182px;width:1px;height:2px;background:#55585e;"></div>
<div class="r" style="left:766px;top:182px;width:1px;height:2px;background:#55585e;"></div>
<div class="r" style="left:794px;top:182px;width:1px;height:2px;background:#55585e;"></div>
<div class="r" style="left:822px;top:182px;width:1px;height:2px;background:#55585e;"></div>
<div class="r" style="left:850px;top:182px;width:1px;height:2px;background:#55585e;"></div>
<div class="r" style="left:878px;top:182px;width:1px;height:2px;background:#55585e;"></div>
<div class="r" style="left:793px;top:192px;width:1px;height:5px;background:#6b7078;"></div>
<div class="r" style="left:864px;top:192px;width:1px;height:5px;background:#6b7078;"></div>
<svg class="r" style="left:716px;top:171px;" width="13" height="28" viewBox="0 0 13 28"><defs><linearGradient id="mk" x1="0" y1="0" x2="0" y2="1"><stop offset="0" stop-color="#ffffff"/><stop offset="1" stop-color="#cfd1d4"/></linearGradient></defs>
<path d="M1.5 1.5 H11.5 V4.5 L6.5 11 L1.5 4.5Z" fill="url(#mk)" stroke="#74797f"/>
<path d="M6.5 12.5 L11.5 18 V20.5 H1.5 V18Z" fill="url(#mk)" stroke="#74797f"/>
<rect x="1.5" y="20.5" width="10" height="6" fill="url(#mk)" stroke="#74797f"/></svg>
<div class="r" style="left:723px;top:198px;width:177px;height:73px;background:#e7e9ec;"></div>
<div class="t" style="left:723.46px;top:297.64px;font-size:23px;line-height:23px;color:#000;font-family:'Liberation Serif', serif;font-weight:normal;font-style:italic;transform:scaleX(1.0313);">Рис.11.</div>
<div class="t" style="left:804.40px;top:297.64px;font-size:23px;line-height:23px;color:#000;font-family:'Liberation Serif', serif;font-weight:normal;font-style:italic;transform:scaleX(1.0313);">Открыти</div>
<div class="t" style="left:724.90px;top:379.15px;font-size:28px;line-height:28px;color:#365f91;font-family:'Liberation Serif', serif;font-weight:bold;font-style:normal;transform:scaleX(1.0177);">Глава</div>
<div class="t" style="left:828.50px;top:379.15px;font-size:28px;line-height:28px;color:#365f91;font-family:'Liberation Serif', serif;font-weight:bold;font-style:normal;transform:scaleX(0.9571);">3.</div>
<div class="t" style="left:877.40px;top:379.15px;font-size:28px;line-height:28px;color:#365f91;font-family:'Liberation Serif', serif;font-weight:bold;font-style:normal;transform:scaleX(0.9571);">Режимы</div>
<div class="t" style="left:724.90px;top:415.15px;font-size:28px;line-height:28px;color:#365f91;font-family:'Liberation Serif', serif;font-weight:bold;font-style:normal;transform:scaleX(1.0155);">Способы</div>
<div class="t" style="left:846.50px;top:415.15px;font-size:28px;line-height:28px;color:#365f91;font-family:'Liberation Serif', serif;font-weight:bold;font-style:normal;transform:scaleX(1.0155);">навигации</div>
<div class="t" style="left:723.00px;top:484.34px;font-size:23px;line-height:23px;color:#000;font-family:'Liberation Serif', serif;font-weight:normal;font-style:normal;transform:scaleX(1.0768);">Когда</div>
<div class="t" style="left:791.00px;top:484.34px;font-size:23px;line-height:23px;color:#000;font-family:'Liberation Serif', serif;font-weight:normal;font-style:normal;transform:scaleX(0.9565);">у</div>
<div class="t" style="left:810.00px;top:484.34px;font-size:23px;line-height:23px;color:#000;font-family:'Liberation Serif', serif;font-weight:normal;font-style:normal;transform:scaleX(1.0323);">вас</div>
<div class="t" style="left:851.00px;top:484.34px;font-size:23px;line-height:23px;color:#000;font-family:'Liberation Serif', serif;font-weight:normal;font-style:normal;transform:scaleX(1.0323);">открыт</div>
<div class="t" style="left:723.70px;top:515.74px;font-size:23px;line-height:23px;color:#000;font-family:'Liberation Serif', serif;font-weight:normal;font-style:normal;transform:scaleX(1.0598);">формата</div>
<div class="t" style="left:818.40px;top:515.74px;font-size:23px;line-height:23px;color:#000;font-family:'Liberation Serif', serif;font-weight:normal;font-style:normal;">А4</div>
<div class="t" style="left:853.60px;top:515.74px;font-size:23px;line-height:23px;color:#000;font-family:'Liberation Serif', serif;font-weight:normal;font-style:normal;">немного</div>
<div class="t" style="left:723.70px;top:546.74px;font-size:23px;line-height:23px;color:#000;font-family:'Liberation Serif', serif;font-weight:normal;font-style:normal;transform:scaleX(1.0338);">вверх</div>
<div class="t" style="left:786.30px;top:546.74px;font-size:23px;line-height:23px;color:#000;font-family:'Liberation Serif', serif;font-weight:normal;font-style:normal;transform:scaleX(1.0389);">или</div>
<div class="t" style="left:830.00px;top:546.74px;font-size:23px;line-height:23px;color:#000;font-family:'Liberation Serif', serif;font-weight:normal;font-style:normal;transform:scaleX(1.0337);">вниз</div>
<div class="t" style="left:882.00px;top:546.74px;font-size:23px;line-height:23px;color:#000;font-family:'Liberation Serif', serif;font-weight:normal;font-style:normal;transform:scaleX(1.0337);">для</div>
<div class="t" style="left:723.70px;top:578.74px;font-size:23px;line-height:23px;color:#000;font-family:'Liberation Serif', serif;font-weight:normal;font-style:normal;transform:scaleX(1.0290);">его,</div>
<div class="t" style="left:774.30px;top:578.74px;font-size:23px;line-height:23px;color:#000;font-family:'Liberation Serif', serif;font-weight:normal;font-style:normal;transform:scaleX(1.0367);">и</div>
<div class="t" style="left:799.70px;top:578.74px;font-size:23px;line-height:23px;color:#000;font-family:'Liberation Serif', serif;font-weight:normal;font-style:normal;transform:scaleX(1.0425);">страница</div>
<svg class="r" style="left:835px;top:538px;" width="13" height="4" viewBox="0 0 13 4"><path d="M0 3 L1.5 1 L3 3 L4.5 1 L6 3 L7.5 1 L9 3 L10.5 1 L12 3" fill="none" stroke="#3c9a3c" stroke-width="0.9"/></svg>
<svg class="r" style="left:0;top:0;" width="900" height="600" viewBox="0 0 900 600"><path d="M649 58 L693 59" stroke="#e8100f" stroke-width="5.6" stroke-linecap="round"/><path d="M22.40 114.70 Q35.57 139.91 54.73 153.18 Q43.33 147.95 36.56 150.08 L70.37 257.63 L64.83 259.37 L31.03 151.82 Q24.25 153.95 17.90 164.75 Q26.03 142.91 22.40 114.70 Z" fill="#e8100f"/><path d="M686.40 42.80 Q699.71 67.94 718.94 81.09 Q707.52 75.93 700.76 78.10 L735.06 185.11 L729.54 186.89 L695.24 79.87 Q688.48 82.04 682.18 92.88 Q690.19 70.99 686.40 42.80 Z" fill="#e8100f"/></svg>
</body></html>
